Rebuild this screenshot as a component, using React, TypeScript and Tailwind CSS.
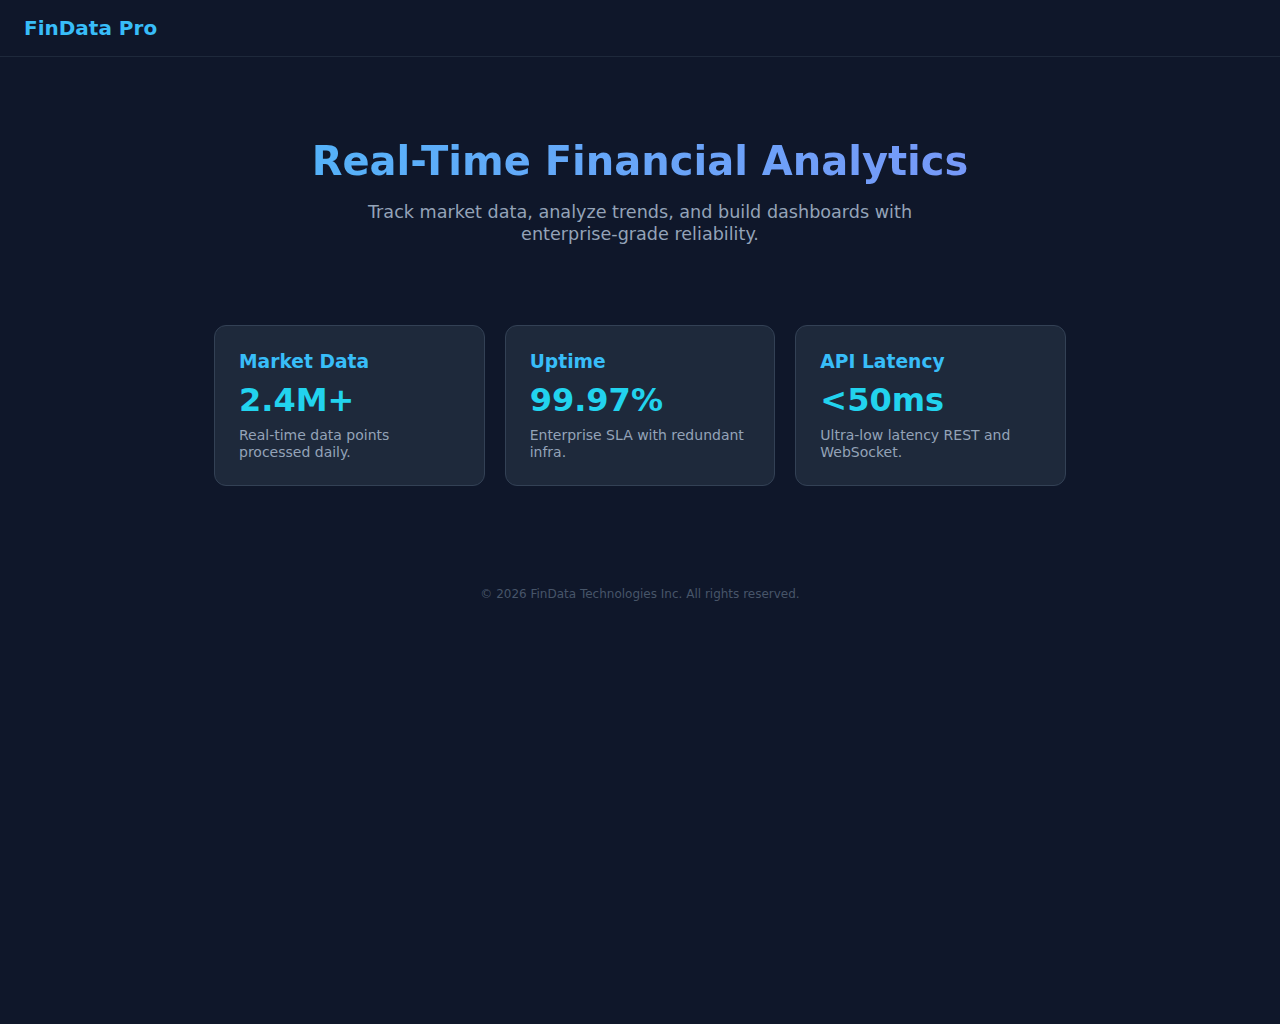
import React from "react";

const cards = [
  { title: "Market Data", value: "2.4M+", desc: "Real-time data points processed daily." },
  { title: "Uptime", value: "99.97%", desc: "Enterprise SLA with redundant infra." },
  { title: "API Latency", value: "<50ms", desc: "Ultra-low latency REST and WebSocket." },
];

export default function App() {
  return (
    <div
      className="min-h-[1024px] bg-[#0f172a] text-slate-200"
      style={{ fontFamily: '"DejaVu Sans", sans-serif' }}
    >
      <header className="h-[57px] border-b border-[#1e293b] px-6 flex items-center">
        <span className="text-[20px] font-bold text-[#38bdf8] leading-[24px]">FinData Pro</span>
      </header>

      <section className="pt-[81px] flex flex-col items-center text-center">
        <h1 className="w-full text-[40px] leading-[47px] font-bold bg-gradient-to-r from-[#38bdf8] to-[#818cf8] bg-clip-text text-transparent">
          Real-Time Financial Analytics
        </h1>
        <p className="mt-[16px] max-w-[576px] text-[17.6px] leading-[22px] text-[#94a3b8]">
          Track market data, analyze trends, and build dashboards with enterprise-grade reliability.
        </p>
      </section>

      <section className="mt-[80px] mx-auto w-[852px] grid grid-cols-3 gap-5">
        {cards.map((c) => (
          <div
            key={c.title}
            className="rounded-xl border border-[#334155] bg-[#1e293b] px-6 pt-[25px] pb-6"
          >
            <div className="text-[18.7px] leading-[21px] font-bold text-[#38bdf8]">{c.title}</div>
            <div className="mt-[10px] text-[32px] leading-[37px] font-bold text-[#22d3ee]">{c.value}</div>
            <div className="mt-[8px] text-[14px] leading-[17px] text-[#94a3b8]">{c.desc}</div>
          </div>
        ))}
      </section>

      <footer className="mt-[101px] text-center text-[12px] leading-[14px] text-[#475569]">
        © 2026 FinData Technologies Inc. All rights reserved.
      </footer>
    </div>
  );
}
